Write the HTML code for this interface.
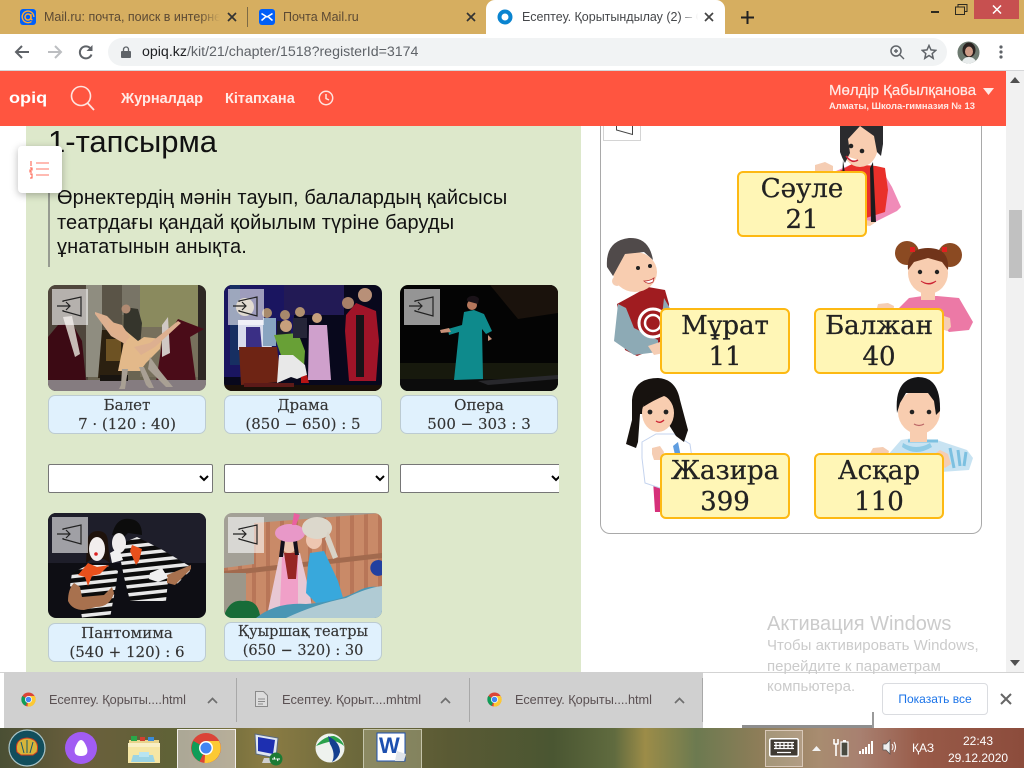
<!DOCTYPE html>
<html lang="kk"><head><meta charset="utf-8"><title>Есептеу</title>
<style>
html,body{margin:0;padding:0;width:1024px;height:768px;overflow:hidden;background:#fff}
body{position:relative;font-family:"Liberation Sans",sans-serif}
.a{position:absolute;white-space:nowrap}
svg{display:block}
.pic{position:absolute;width:158px;height:106px;border-radius:8px;overflow:hidden}
.ov{position:absolute;left:4px;top:4px;width:36px;height:36px;background:rgba(255,255,255,.58)}
.ov svg{position:absolute;left:5px;top:7px}
.cap{position:absolute;width:156px;height:37px;background:#e0f1fd;border:1px solid #bccbd2;border-radius:7px;text-align:center;font:15px/18.5px "DejaVu Serif",serif;color:#333;white-space:nowrap;-webkit-text-stroke:.15px #333}
select{position:absolute;height:29px;width:165px;background:#fff;border:1px solid #767676;border-radius:2px;margin:0;padding:0}
.sign{position:absolute;width:126px;height:61px;padding-top:1px;background:#fff6b6;border:2px solid #fdb913;border-radius:6px;text-align:center;font:26px/31px "DejaVu Serif",serif;color:#222;-webkit-text-stroke:.3px #222}
</style></head><body>

<!-- chrome tab strip -->
<div class="a" style="left:0;top:0;width:1024px;height:34px;background:#d6ae60"></div>
<svg class="a" style="left:20px;top:9px" width="16" height="16"><rect width="16" height="16" rx="3" fill="#005ff9"/><circle cx="8" cy="8" r="3" fill="none" stroke="#ffa930" stroke-width="1.500"/><path d="M11 5v4.500q0 1.500 1.500 1M11.500 12.500a5.800 5.800 0 1 1 2.300-4.500" fill="none" stroke="#ffa930" stroke-width="1.400"/></svg>
<div class="a" style="left:44px;top:10px;width:176px;overflow:hidden;font-size:12.500px;line-height:15px;color:#5c4a34">Mail.ru: почта, поиск в интернете</div>
<div class="a" style="left:200px;top:8px;width:20px;height:18px;background:linear-gradient(90deg,rgba(214,174,96,0),#d6ae60)"></div>
<svg class="a" style="left:227px;top:12px" width="10" height="10"><path d="M1 1l8 8M9 1l-8 8" stroke="#333" stroke-width="1.700"/></svg>
<div class="a" style="left:247px;top:7px;width:1px;height:20px;background:#7d6a45"></div>
<svg class="a" style="left:259px;top:9px" width="16" height="16"><rect width="16" height="16" rx="3" fill="#005ff9"/><path d="M2.500 4.500l5.500 3.500 5.500-3.500M2.500 11.500l4-3.500M13.500 11.500l-4-3.500" fill="none" stroke="#fff" stroke-width="1.500"/></svg>
<div class="a" style="left:283px;top:10px;font-size:12.500px;line-height:15px;color:#5c4a34">Почта Mail.ru</div>
<svg class="a" style="left:466px;top:12px" width="10" height="10"><path d="M1 1l8 8M9 1l-8 8" stroke="#333" stroke-width="1.700"/></svg>
<div class="a" style="left:486px;top:0;width:239px;height:34px;background:#fff;border-radius:9px 9px 0 0"></div>
<svg class="a" style="left:497px;top:9px" width="16" height="16"><circle cx="8" cy="8" r="5.500" fill="none" stroke="#0a84d0" stroke-width="4"/></svg>
<div class="a" style="left:522px;top:10px;width:176px;overflow:hidden;font-size:12.500px;line-height:15px;color:#45474a">Есептеу. Қорытындылау (2) – Opiq</div>
<div class="a" style="left:680px;top:8px;width:18px;height:18px;background:linear-gradient(90deg,rgba(255,255,255,0),#fff)"></div>
<svg class="a" style="left:704px;top:12px" width="10" height="10"><path d="M1 1l8 8M9 1l-8 8" stroke="#444" stroke-width="1.700"/></svg>
<svg class="a" style="left:741px;top:11px" width="13" height="13"><path d="M6.500 0v13M0 6.500h13" stroke="#222" stroke-width="2"/></svg>
<div class="a" style="left:931px;top:11px;width:8px;height:2px;background:#2d2a20"></div>
<svg class="a" style="left:955px;top:4px" width="13" height="11"><path d="M3 2.500V.500h9v7h-2M.500 3h9v7.500h-9z" fill="none" stroke="#2d2a20"/></svg>
<div class="a" style="left:974px;top:0;width:45px;height:19px;background:#c75050"></div>
<svg class="a" style="left:992px;top:5px" width="10" height="9"><path d="M1 .500l8 8M9 .500l-8 8" stroke="#fff" stroke-width="1.500"/></svg>

<!-- address bar -->
<div class="a" style="left:0;top:34px;width:1024px;height:37px;background:#fff"></div>
<div class="a" style="left:0;top:70px;width:1024px;height:1px;background:#d5d6d8"></div>
<svg class="a" style="left:14px;top:44px" width="16" height="16"><path d="M15 8H2.500M8 2L2 8l6 6" fill="none" stroke="#5f6368" stroke-width="2"/></svg>
<svg class="a" style="left:47px;top:44px" width="16" height="16"><path d="M1 8h12.500M8 2l6 6-6 6" fill="none" stroke="#bcbec1" stroke-width="2"/></svg>
<svg class="a" style="left:78px;top:44px" width="16" height="16"><path d="M13.500 10.500a6 6 0 1 1-.8-5.700" fill="none" stroke="#5f6368" stroke-width="2"/><path d="M14.500 1v6h-6z" fill="#5f6368"/></svg>
<div class="a" style="left:108px;top:38px;width:839px;height:28px;background:#f1f3f4;border-radius:14px"></div>
<svg class="a" style="left:121px;top:46px" width="10" height="12"><rect y="5" width="10" height="7" rx="1" fill="#5f6368"/><path d="M2.500 5V3.500a2.500 2.500 0 0 1 5 0V5" fill="none" stroke="#5f6368" stroke-width="1.300"/></svg>
<div class="a" style="left:142px;top:44px;font-size:14.200px;line-height:16px;color:#5f6368"><span style="color:#202124">opiq.kz</span>/kit/21/chapter/1518?registerId=3174</div>
<svg class="a" style="left:889px;top:44px" width="16" height="16"><circle cx="7" cy="7" r="5" fill="none" stroke="#5f6368" stroke-width="1.500"/><path d="M11 11l4 4M5 7h4M7 5v4" stroke="#5f6368" stroke-width="1.400" fill="none"/></svg>
<svg class="a" style="left:921px;top:44px" width="16" height="16"><path d="M8 1.500l2 4.400 4.700.5-3.500 3.200 1 4.700L8 11.500l-4.200 2.800 1-4.700L1.300 6.400 6 5.900z" fill="none" stroke="#5f6368" stroke-width="1.500"/></svg>
<svg class="a" style="left:957px;top:41px" width="23" height="23"><defs><clipPath id="av"><circle cx="11.500" cy="11.500" r="11"/></clipPath></defs><g clip-path="url(#av)"><rect width="23" height="23" fill="#6d7a70"/><ellipse cx="12" cy="9" rx="6.500" ry="7.500" fill="#2a2220"/><ellipse cx="12" cy="10.500" rx="4" ry="5" fill="#cf9d88"/><path d="M4 23q2-7 8-7t8 7z" fill="#e8ecec"/></g></svg>
<svg class="a" style="left:999px;top:45px" width="4" height="14"><circle cx="2" cy="2" r="1.600" fill="#5f6368"/><circle cx="2" cy="7" r="1.600" fill="#5f6368"/><circle cx="2" cy="12" r="1.600" fill="#5f6368"/></svg>

<!-- scrollbar -->
<div class="a" style="left:1006px;top:71px;width:18px;height:601px;background:#f1f1f1"></div>
<svg class="a" style="left:1010px;top:77px" width="10" height="6"><path d="M5 0l5 6H0z" fill="#505050"/></svg>
<svg class="a" style="left:1010px;top:660px" width="10" height="6"><path d="M5 6L0 0h10z" fill="#505050"/></svg>
<div class="a" style="left:1009px;top:210px;width:13px;height:68px;background:#c1c1c1"></div>

<!-- site header -->
<div class="a" style="left:0;top:71px;width:1006px;height:55px;background:#ff5540"></div>
<div class="a" style="left:9px;top:90px;font-size:16px;line-height:18px;font-weight:700;color:#fff;transform:scaleX(1.130);transform-origin:0 0">opiq</div>
<svg class="a" style="left:70px;top:85px" width="26" height="26"><circle cx="11" cy="11" r="9.500" fill="none" stroke="#ffe3de" stroke-width="1.600"/><path d="M17.500 18l6.500 7" stroke="#ffe3de" stroke-width="1.800"/></svg>
<div class="a" style="left:121px;top:91px;font-size:14.500px;line-height:16px;font-weight:700;color:#ffeae6">Журналдар</div>
<div class="a" style="left:225px;top:91px;font-size:14.500px;line-height:16px;font-weight:700;color:#ffeae6">Кітапхана</div>
<svg class="a" style="left:318px;top:90px" width="16" height="16"><circle cx="8" cy="8" r="6.700" fill="none" stroke="#ffe3de" stroke-width="1.500"/><path d="M8 4v4.500l3 1.500" fill="none" stroke="#ffe3de" stroke-width="1.500"/></svg>
<div class="a" style="left:829px;top:83px;font-size:15px;line-height:16px;color:#ffeae6;-webkit-text-stroke:.2px #ffeae6">Мөлдір Қабылқанова</div>
<div class="a" style="left:829px;top:100px;font-size:9.400px;line-height:11px;font-weight:700;color:#ffeae6">Алматы, Школа-гимназия № 13</div>
<svg class="a" style="left:983px;top:88px" width="11" height="7"><path d="M5.500 7L0 0h11z" fill="#ffeae6"/></svg>

<!-- green panel -->
<div class="a" style="left:26px;top:126px;width:555px;height:546px;background:#dde8cb"></div>
<div class="a" style="left:48px;top:124px;font-size:31px;line-height:36px;color:#111">1-тапсырма</div>
<div class="a" style="left:48px;top:193px;width:2px;height:74px;background:#979c91"></div>
<div class="a" style="left:57px;top:186px;font-size:20px;letter-spacing:.12px;line-height:24.500px;color:#111">Өрнектердің мәнін тауып, балалардың қайсысы<br>театрдағы қандай қойылым түріне баруды<br>ұнататынын анықта.</div>
<div class="a" style="left:18px;top:146px;width:44px;height:47px;background:#fff;border-radius:4px;box-shadow:0 2px 8px rgba(0,0,0,.28)"></div>
<svg class="a" style="left:29px;top:161px" width="21" height="18"><path d="M7 2h13M7 8h13M7 14h13" stroke="#ff7466" stroke-width="1"/><path d="M2 0v5M1 7h2v2H1v2h2M1 13h2v4H1" fill="none" stroke="#ff5540" stroke-width="1"/></svg>

<!-- ballet -->
<div class="pic" style="left:48px;top:285px"><svg width="158" height="106"><rect width="158" height="106" fill="#6a6452"/><rect width="40" height="106" fill="#4f463c"/><rect x="38" width="16" height="92" fill="#8f8d80"/><rect x="54" width="20" height="45" fill="#5a5447"/><rect x="92" width="58" height="42" fill="#8a8a5e"/><rect x="74" y="0" width="18" height="30" fill="#787466"/><rect x="150" width="8" height="96" fill="#2e2824"/><rect x="92" y="42" width="58" height="50" fill="#77705c"/><path d="M54 45h23v48H50z" fill="#2b2010"/><rect x="58" y="54" width="15" height="22" fill="#6d5223"/><path d="M0 52l10-12 14-2 10 18 4 40 3 3H0z" fill="#3c0a14"/><path d="M15 32l9-1 8 38-5 3z" fill="#c7bcb6"/><path d="M114 58l10-14 6-10 26 10-14 8 6 45h-40z" fill="#4a0c18"/><path d="M114 40l6-8 2 36-8 4z" fill="#cfc8c4"/><rect y="95" width="158" height="11" fill="#857c80"/><path d="M52 90h28v6H52z" fill="#181410"/><path d="M76 22l14 2 4 14-2 24-17 4z" fill="#35352c"/><circle cx="78" cy="24" r="4.500" fill="#b08a72"/><path d="M78 46l12 10 6-4 18 2-2 10-14 14-6 8-22 0z" fill="#e3b98a"/><path d="M47 27l12 4 14 14 8 6-4 8-14-8-16-22z" fill="#ddb090"/><path d="M60 36l14 4 8 12-6 6-14-12z" fill="#e0b08c"/><path d="M86 62l16-4 28-22 3 2-26 24-14 8z" fill="#ddb090"/><path d="M74 84l-1 16-2 4h6l3-20zM96 82h-5l7 18 3 3h5zM102 72l10 14 13 16h-7L100 84z" fill="#a9a094"/></svg><div class="ov"><svg width="26" height="22" viewBox="0 0 26 22"><path d="M0 10h13M9 6l4 4-4 4M6 6V5l18-4v19L6 15v-1" fill="none" stroke="#222" stroke-width="1.200"/></svg></div></div>

<!-- drama -->
<div class="pic" style="left:224px;top:285px"><svg width="158" height="106"><rect width="158" height="106" fill="#08081c"/><rect width="70" height="92" fill="#1a1560"/><rect x="60" y="0" width="60" height="30" fill="#221a55"/><rect x="6" y="0" width="10" height="80" fill="#172f62"/><circle cx="21" cy="22" r="9" fill="#b9aa92"/><path d="M14 35h32l2 30H14z" fill="#d8dcec"/><path d="M22 42h14l2 22H22z" fill="#3a2f85"/><path d="M15 62h38l4 35-40 3z" fill="#6e2414"/><circle cx="43" cy="28" r="5" fill="#a88a6c"/><rect x="39" y="33" width="13" height="28" fill="#88a4c0"/><circle cx="61" cy="30" r="5" fill="#a8886c"/><path d="M53 36h14v14H53z" fill="#1c1c2c"/><circle cx="62" cy="41" r="6" fill="#c7a07c"/><path d="M50 50l24-2 7 18-1 16-11-8-8 8z" fill="#68a036"/><path d="M55 70l14 0 12 10 2 10-10 4-6-2-14 6z" fill="#e8e8e8"/><path d="M77 92l6-2 2 8-8 0z" fill="#b81414"/><circle cx="93" cy="33" r="5" fill="#c7a07c"/><path d="M85 40h18l4 55H84z" fill="#cfa0cc"/><circle cx="76" cy="27" r="5" fill="#b09070"/><path d="M69 33h14v20H69z" fill="#252538"/><circle cx="124" cy="18" r="6" fill="#a88068"/><circle cx="141" cy="10" r="7" fill="#b89078"/><path d="M122 30l10-12 20 8 3 30-3 40h-27l-4-50z" fill="#a01428"/><path d="M132 30h8v62h-8z" fill="#181318"/><path d="M0 100h158v6H0z" fill="#1a1008"/><path d="M20 98h50v4H20z" fill="#5c1a18"/></svg><div class="ov"><svg width="26" height="22" viewBox="0 0 26 22"><path d="M0 10h13M9 6l4 4-4 4M6 6V5l18-4v19L6 15v-1" fill="none" stroke="#222" stroke-width="1.200"/></svg></div></div>

<!-- opera -->
<div class="pic" style="left:400px;top:285px"><svg width="158" height="106"><rect width="158" height="106" fill="#040404"/><path d="M90 0h68v28l-40 6z" fill="#1a120c"/><rect y="78" width="158" height="20" fill="#17190d"/><rect y="94" width="158" height="12" fill="#0c0c0c"/><path d="M78 96l80-6v4l-70 6z" fill="#28282c"/><circle cx="72" cy="20" r="5" fill="#b5775c"/><path d="M67 16a6 4 0 0 1 12-2l-1 5z" fill="#1a1218"/><path d="M64 27l10-2 10 4 8 17-6 3-4-5 1 50-29 1 5-48-10 3-1-6 14-4z" fill="#0e8a8c"/><path d="M49 43l-9 2 1 3 10-1zM88 50l4 4-4 2z" fill="#c79078"/></svg><div class="ov"><svg width="26" height="22" viewBox="0 0 26 22"><path d="M0 10h13M9 6l4 4-4 4M6 6V5l18-4v19L6 15v-1" fill="none" stroke="#222" stroke-width="1.200"/></svg></div></div>

<div class="cap" style="left:48px;top:395px">Балет<br>7 · (120 : 40)</div>
<div class="cap" style="left:224px;top:395px">Драма<br>(850 − 650) : 5</div>
<div class="cap" style="left:400px;top:395px">Опера<br>500 − 303 : 3</div>

<select style="left:48px;top:464px"></select>
<select style="left:224px;top:464px"></select>
<div class="a" style="left:400px;top:464px;width:159px;height:29px;overflow:hidden"><select style="left:0;top:0"></select></div>

<!-- pantomime -->
<div class="pic" style="left:48px;top:513px;height:105px"><svg width="158" height="105"><defs><pattern id="st" width="10" height="8" patternUnits="userSpaceOnUse" patternTransform="rotate(-6)"><rect width="10" height="8" fill="#0c0c0c"/><rect width="10" height="3.500" fill="#e8e8e8"/></pattern></defs><rect width="158" height="105" fill="#0e0e14"/><rect width="158" height="50" fill="#1e1e2a"/><path d="M24 60l16-8 18 0 12 6-2 14-6 33H34l-4-24-8-8z" fill="url(#st)"/><path d="M20 88q0-12 6-18l6 4 2 10 22-2 8-8 2 6q-4 14-18 14l-12 3q-12 0-16-9z" fill="#a8714e"/><path d="M39 32q0-14 11-14 10 0 10 12l2 20-6-4H44l-6 4z" fill="#1e120c"/><ellipse cx="49" cy="36" rx="8" ry="12" fill="#f2eeee"/><circle cx="48" cy="41" r="1.800" fill="#d22"/><path d="M30 62l10-12 9 4 12-2-9 9-8 2-4 10-3-9z" fill="#e8501c"/><path d="M75 30l14-6 24 12 30 18-1 4-14 14-8-4-2 20H82l-6-24-4-20z" fill="url(#st)"/><path d="M119 62l24-10 0 4-16 16-8-2z" fill="#a8714e"/><path d="M102 60l12-5 6 10-10 4-9-3z" fill="#f0f0f0"/><path d="M64 22q4-18 18-16 12 1 12 16l-14-2-4 4z" fill="#0c0c0c"/><ellipse cx="71" cy="30" rx="7" ry="10" fill="#efecec"/><path d="M62 40l9-5 4 12-11 3z" fill="#f0f0f0"/><path d="M84 32l10 4-3 12-3 4-6-14z" fill="#e8501c"/></svg><div class="ov"><svg width="26" height="22" viewBox="0 0 26 22"><path d="M0 10h13M9 6l4 4-4 4M6 6V5l18-4v19L6 15v-1" fill="none" stroke="#222" stroke-width="1.200"/></svg></div></div>

<!-- puppets -->
<div class="pic" style="left:224px;top:513px;height:105px"><svg width="158" height="105"><defs><pattern id="cu" width="14" height="60" patternUnits="userSpaceOnUse"><rect width="14" height="60" fill="#c98a68"/><rect width="4" height="60" fill="#b87658"/></pattern></defs><rect width="158" height="105" fill="#a3a096"/><path d="M30 10l128-10v105H0V55l30-4z" fill="url(#cu)"/><path d="M0 58L158 40v5L0 63z" fill="#a26a4e"/><path d="M0 60h22v45H0z" fill="#9c978a"/><path d="M46 88l10-48 20 0 10 42 2 12-44 4z" fill="#e8c8d4"/><path d="M58 44h16v50H56z" fill="#f0a0c8"/><path d="M60 40h14l-2 26h-8z" fill="#962624"/><ellipse cx="65" cy="31" rx="8" ry="9" fill="#eec6b0"/><path d="M57 28q8-10 16 0l2 14h-4l-2-14q-4-3-8 0l-2 16h-4z" fill="#15101c"/><ellipse cx="66" cy="20" rx="15" ry="9" fill="#e898c8"/><path d="M68 12l2-12 6 2-4 10z" fill="#ea60a0"/><path d="M86 40l14-2 14 30 6 20-28 2-10-10 2-28z" fill="#38a8dc"/><ellipse cx="90" cy="27" rx="8" ry="9" fill="#eec6b0"/><ellipse cx="93" cy="15" rx="15" ry="11" fill="#dcd8cc"/><path d="M104 18l10 26-5 2-8-20z" fill="#d8d2c6"/><path d="M1 100q6-14 18-12 14-2 17 14v3H1z" fill="#186c38"/><path d="M32 105q20-16 50-14 30-2 50-12 14-8 26-4v30z" fill="#4a96b4"/><path d="M62 105q30-14 60-20 20-10 36-12v32z" fill="#b0cbd4"/><path d="M148 50a8 8 0 0 1 10-2v14a8 8 0 0 1-10-12z" fill="#2240a0"/></svg><div class="ov"><svg width="26" height="22" viewBox="0 0 26 22"><path d="M0 10h13M9 6l4 4-4 4M6 6V5l18-4v19L6 15v-1" fill="none" stroke="#222" stroke-width="1.200"/></svg></div></div>

<div class="cap" style="left:48px;top:623px">Пантомима<br>(540 + 120) : 6</div>
<div class="cap" style="left:224px;top:622px;font-size:14.500px">Қуыршақ театры<br>(650 − 320) : 30</div>

<!-- right card -->
<div class="a" style="left:600px;top:126px;width:380px;height:407px;border:1px solid #a9a9a9;border-top:0;border-radius:0 0 10px 10px"></div>
<div class="a" style="left:603px;top:126px;width:36px;height:14px;border:1px solid #d4d4d4;border-top:0;background:#fff"></div>
<svg class="a" style="left:616px;top:126px" width="20" height="10"><path d="M.500 0v4l16 4.500V0" fill="none" stroke="#444" stroke-width="1"/></svg>

<!-- children -->
<svg class="a" style="left:590px;top:126px" width="420" height="400" viewBox="590 126 420 400">
<!-- Saule -->
<path d="M836 171l14-6 24 2 6 0 12 20 9 20-4 4-24 12-10 3-20-40z" fill="#f08bb8"/><path d="M838 172l14-8 24 2 9 2 3 22-3 22-19 6-22-30z" fill="#e9302a"/>
<path d="M866 220l10 2-6 4-8-1-4-3z" fill="#f5cdb3"/><path d="M815 173l0-8 10-3 8 4 0 9-6 6z" fill="#f5cdb3"/>
<ellipse cx="860" cy="146" rx="18" ry="21" fill="#f8cdb0"/>
<path d="M840 126v26q2 6 5 11l5-10-2-14 12-13 14 10 3 16 4 4 2-12v-18z" fill="#2b2b2e"/><path d="M843 160l3 20h-4zM873 162l3 60-5 0-1-54z" fill="#1c1c1e"/>
<circle cx="851" cy="146" r="2.300" fill="#222"/><circle cx="862" cy="151" r="2.300" fill="#222"/><path d="M846 156q6 8 12 4" fill="#fff" stroke="#c23" stroke-width="1.500"/>
<!-- Murat -->
<path d="M617 304l31-17 17 3 4 14-2 40-30 12-12-6z" fill="#a01c20"/><path d="M618 304l8 4 8 20 24 12v12l-24 3-20-14z" fill="#8daab5"/><path d="M664 298l8 14-10 4z" fill="#8daab5"/>
<circle cx="653" cy="323" r="14" fill="none" stroke="#fff" stroke-width="3"/><circle cx="653" cy="323" r="8" fill="none" stroke="#fff" stroke-width="2.500"/>
<path d="M648 346l12-4 4 4 0 7-10 2z" fill="#f5cdb3"/>
<circle cx="617" cy="281" r="5" fill="#f5cdb3"/><ellipse cx="635" cy="272" rx="22" ry="20" fill="#f8cdb0"/>
<path d="M607 267q-2-26 22-29 20-1 24 22l-9-8-19 2-12 22z" fill="#504a4a"/>
<circle cx="638" cy="268" r="2" fill="#222"/><circle cx="650" cy="266" r="2" fill="#222"/><path d="M644 281q6 0 10-3l-1 4q-5 3-9-1z" fill="#fff" stroke="#b33" stroke-width=".8"/>
<!-- Balzhan -->
<path d="M897 310l12-12 14-2 14 0 22 2 14 24-4 8-20 2-20-20z" fill="#ec79a6"/><path d="M876 312l2-8 10-1 6 3-1 9-4 5-8-1z" fill="#f5cdb3"/><path d="M935 320l6-5 9 3 1 9-4 4-8-3z" fill="#f5cdb3"/>
<circle cx="907" cy="253" r="12" fill="#8b4a22"/><circle cx="950" cy="255" r="12" fill="#8b4a22"/>
<ellipse cx="928" cy="273" rx="20" ry="21" fill="#f8cdb0"/><rect x="921" y="290" width="14" height="10" fill="#f8cdb0"/><path d="M908 270q-2-22 20-22t20 22l-6-8-14-4-14 4z" fill="#71341a"/>
<rect x="910" y="247" width="5" height="5" fill="#e02020"/><rect x="942" y="247" width="5" height="5" fill="#e02020"/>
<circle cx="920" cy="272" r="2.200" fill="#222"/><circle cx="937" cy="272" r="2.200" fill="#222"/><path d="M921 281q7 5 15 0-7 6-15 0z" fill="#fff" stroke="#c23"/>
<!-- Zhazira -->
<path d="M653 480h8v32h-6z" fill="#d6307a"/><path d="M642 442l14-8 18 0 16 10 2 14-12 4-2 20-18 6-15-5-3-25z" fill="#fff" stroke="#c4d3ee"/><path d="M678 442l4 20-5 2-4-18z" fill="#5f9de0"/>
<path d="M632 400q2-22 26-22 18 1 22 22l8 30-4 12-8-6-14-22h-22l-2 28-2 6-10-4 6-24z" fill="#17120f"/>
<ellipse cx="658" cy="413" rx="16" ry="19" fill="#f8cdb0"/><path d="M643 407q2-14 16-15 14 1 15 16-4-10-10-12-10 4-21 11z" fill="#17120f"/>
<circle cx="650" cy="412" r="2.400" fill="#222"/><circle cx="666" cy="412" r="2.400" fill="#222"/><path d="M656 421q4 3 8-1" stroke="#c23" stroke-width="1.300" fill="none"/>
<path d="M652 448l8-2 4 6-2 8h-8l-2-6z" fill="#f5cdb3"/>
<!-- Asqar -->
<path d="M887 456l14-16 12-2 10 4 14-2 30 10 6 8-4 12-28 2-20-10-20 2z" fill="#c8e3f2"/><path d="M950 448l4 20M958 450l2 16M966 452l-2 14M908 441l30 0" stroke="#7cc0e0" stroke-width="3" fill="none"/><path d="M903 443q13 8 27 0l2 4q-16 10-30 0z" fill="#8fcbe6"/>
<path d="M869 455l4-7 10-1 6 4-2 8-6 8-8-2z" fill="#f5cdb3"/><path d="M932 456l8-6 8 4 3 10-6 4-9-6z" fill="#f5cdb3"/>
<rect x="910" y="428" width="17" height="14" fill="#f8cdb0"/>
<ellipse cx="919" cy="412" rx="21" ry="22" fill="#f8cdb0"/>
<path d="M897 413q-3-34 21-36 23 0 22 34l-4 4-2-14-6-8-22 0-6 10z" fill="#141416"/>
<circle cx="912" cy="412" r="2.300" fill="#222"/><circle cx="929" cy="412" r="2.300" fill="#222"/><path d="M914 424q5 3 10 0" stroke="#b66" stroke-width="1.200" fill="none"/>
</svg>

<div class="sign" style="left:737px;top:171px">Сәуле<br>21</div>
<div class="sign" style="left:660px;top:308px">Мұрат<br>11</div>
<div class="sign" style="left:814px;top:308px">Балжан<br>40</div>
<div class="sign" style="left:660px;top:453px">Жазира<br>399</div>
<div class="sign" style="left:814px;top:453px">Асқар<br>110</div>

<!-- download shelf -->
<div class="a" style="left:0;top:672px;width:1024px;height:56px;background:#fff;border-top:1px solid #d3d3d3;box-sizing:border-box"></div>
<div class="a" style="left:4px;top:672px;width:699px;height:56px;background:#d0d0d0"></div>
<svg class="a" style="left:21px;top:692px" width="15" height="15" viewBox="0 0 30 30"><circle cx="15" cy="15" r="14" fill="#db4437"/><path d="M15 15L2.500 8A14 14 0 0 0 9 27.700z" fill="#0f9d58"/><path d="M15 8h12.300A14 14 0 0 1 13 29z" fill="#fcc934"/><circle cx="15" cy="15" r="7" fill="#fff"/><circle cx="15" cy="15" r="5.500" fill="#4285f4"/></svg>
<div class="a" style="left:49px;top:692px;font-size:12.700px;line-height:16px;color:#5a5052">Есептеу. Қорыты....html</div>
<svg class="a" style="left:207px;top:697px" width="11" height="7"><path d="M1 6l4.500-4.500L10 6" fill="none" stroke="#6f6f6f" stroke-width="1.700"/></svg>
<div class="a" style="left:236px;top:678px;width:1px;height:44px;background:#a8a8a8"></div>
<svg class="a" style="left:255px;top:691px" width="13" height="16"><path d="M.500.500h8l4 4v11H.500z" fill="#dcdcdc" stroke="#8a8a8a"/><path d="M3 8h7M3 10.500h7M3 13h5" stroke="#8a8a8a"/></svg>
<div class="a" style="left:282px;top:692px;font-size:12.900px;line-height:16px;color:#5a5052">Есептеу. Қорыт....mhtml</div>
<svg class="a" style="left:440px;top:697px" width="11" height="7"><path d="M1 6l4.500-4.500L10 6" fill="none" stroke="#6f6f6f" stroke-width="1.700"/></svg>
<div class="a" style="left:469px;top:678px;width:1px;height:44px;background:#a8a8a8"></div>
<svg class="a" style="left:487px;top:692px" width="15" height="15" viewBox="0 0 30 30"><circle cx="15" cy="15" r="14" fill="#db4437"/><path d="M15 15L2.500 8A14 14 0 0 0 9 27.700z" fill="#0f9d58"/><path d="M15 8h12.300A14 14 0 0 1 13 29z" fill="#fcc934"/><circle cx="15" cy="15" r="7" fill="#fff"/><circle cx="15" cy="15" r="5.500" fill="#4285f4"/></svg>
<div class="a" style="left:515px;top:692px;font-size:12.700px;line-height:16px;color:#5a5052">Есептеу. Қорыты....html</div>
<svg class="a" style="left:674px;top:697px" width="11" height="7"><path d="M1 6l4.500-4.500L10 6" fill="none" stroke="#6f6f6f" stroke-width="1.700"/></svg>
<div class="a" style="left:702px;top:678px;width:1px;height:44px;background:#a8a8a8"></div>
<div class="a" style="left:882px;top:683px;width:104px;height:30px;border:1px solid #dadce0;border-radius:4px;background:#fff;text-align:center;font-size:12px;line-height:30px;color:#1a73e8">Показать все</div>
<svg class="a" style="left:1000px;top:693px" width="12" height="12"><path d="M1 1l10 10M11 1L1 11" stroke="#666" stroke-width="2"/></svg>

<!-- activation watermark -->
<div class="a" style="left:767px;top:612px;font-size:20px;line-height:24px;color:#cbcbcb">Активация Windows</div>
<div class="a" style="left:767px;top:636px;font-size:15px;line-height:20.500px;color:#cbcbcb">Чтобы активировать Windows,<br>перейдите к параметрам<br>компьютера.</div>

<!-- taskbar -->
<div class="a" style="left:0;top:728px;width:1024px;height:40px;background:linear-gradient(90deg,#4a4f34 0%,#6b5f3c 8%,#5e6236 18%,#8b7c44 26%,#6e6a3c 34%,#5a5a34 44%,#4a5632 54%,#606b3f 60%,#9c8c48 63%,#6c7a50 68%,#8d7d58 74%,#a88c70 80%,#a88070 84%,#985a48 90%,#8c4c3c 100%)"></div>
<div class="a" style="left:742px;top:725px;width:131px;height:3px;background:#8e8e8e"></div>
<div class="a" style="left:872px;top:712px;width:2px;height:16px;background:#9a9a9a"></div>

<svg class="a" style="left:8px;top:729px" width="38" height="38"><circle cx="19" cy="19" r="18" fill="#124e5c" stroke="#a9c4c8" stroke-width="1.200"/><path d="M9 23q-3-13 10-14 13 1 10 14l-4 3H13z" fill="#d7b53a" stroke="#d03a20"/><path d="M19 11v13M13 13l3 11M25 13l-3 11" stroke="#1a5a6a"/></svg>
<svg class="a" style="left:65px;top:732px" width="32" height="32"><circle cx="16" cy="16" r="16" fill="#a15cf3"/><path d="M16 8q3 0 6 8 2 8-6 8t-6-8q3-8 6-8z" fill="#fff"/></svg>
<svg class="a" style="left:127px;top:733px" width="34" height="31"><path d="M2 7h30v6H2z" fill="#e8d48c"/><rect x="4" y="3" width="6" height="5" fill="#29a84a"/><rect x="13" y="4" width="5" height="4" fill="#d04030"/><rect x="21" y="4" width="6" height="4" fill="#3a8ad8"/><path d="M1 10h32v20H1z" fill="#f6e6a4"/><path d="M1 10h32v4H1z" fill="#f9efc4"/><path d="M6 22h20l2 7H4z" fill="#9cd4e4"/><rect x="12" y="19" width="10" height="5" fill="#b8e4f0"/></svg>
<div class="a" style="left:177px;top:729px;width:57px;height:38px;background:rgba(225,215,215,.6);border:1px solid #f1eeea;box-sizing:content-box"></div>
<svg class="a" style="left:191px;top:733px" width="30" height="30"><circle cx="15" cy="15" r="15" fill="#db4437"/><path d="M15 15L2.500 8A15 15 0 0 0 8.500 28.500z" fill="#0f9d58"/><path d="M15 8h13A15 15 0 0 1 13.500 30z" fill="#fcc934"/><circle cx="15" cy="15" r="7" fill="#fff"/><circle cx="15" cy="15" r="5.500" fill="#4285f4"/></svg>
<svg class="a" style="left:252px;top:732px" width="32" height="34"><path d="M3 2l23 4-2 20-20-4z" fill="#dfe6f0" stroke="#5a6a80"/><path d="M6 5l17 3-2 14-15-3z" fill="#1d2fb0"/><path d="M12 26h10l3 5H10z" fill="#cfcfd0"/><circle cx="24" cy="27" r="6.500" fill="#1c7a34"/><path d="M20 27h3l-1-2M28 27h-3l1 2" stroke="#fff" fill="none"/></svg>
<svg class="a" style="left:315px;top:733px" width="30" height="30"><circle cx="15" cy="15" r="14.500" fill="#eef2ee"/><path d="M1 13q8-10 18-10 8 3 10 10-6-5-12-5-8 2-16 5z" fill="#2ba24c"/><path d="M13 3q12 6 12 16-2 7-8 10 4-8-2-18z" fill="#15408f"/></svg>
<div class="a" style="left:363px;top:729px;width:57px;height:38px;background:rgba(215,215,190,.3);border:1px solid #c4c4aa"></div>
<svg class="a" style="left:376px;top:732px" width="31" height="31"><rect x="1" y="1" width="28" height="28" fill="#fff" stroke="#1d50b0"/><text x="3" y="21" font-family="Liberation Sans,sans-serif" font-size="22" font-weight="700" fill="#1d50b0">W</text><path d="M21 19l9 3-2 7H19z" fill="#dfe4ea"/></svg>

<div class="a" style="left:765px;top:730px;width:36px;height:35px;background:rgba(255,255,255,.18);border:1px solid #d9c8b8"></div>
<svg class="a" style="left:769px;top:738px" width="30" height="20"><rect x=".750" y=".750" width="28.500" height="17.500" rx="1.500" fill="#3f3a32" stroke="#fff" stroke-width="1.500"/><path d="M5 4.500h20M5 7.500h20M5 10.500h20M7 4v7M11 4v7M15 4v7M19 4v7M23 4v7M8 14.500h14" stroke="#fff" stroke-width="1.200"/></svg>
<svg class="a" style="left:812px;top:746px" width="9" height="5"><path d="M4.500 0L9 5H0z" fill="#f2f2f2"/></svg>
<svg class="a" style="left:833px;top:739px" width="16" height="18"><path d="M.500 5h5M3 5v12M1 0v5M5 0v5" stroke="#fff" stroke-width="1.600" fill="none"/><rect x="8" y="3" width="7" height="14" fill="#4a4a40" stroke="#fff" stroke-width="1.200"/><rect x="10" y="1" width="3" height="2" fill="#fff"/></svg>
<svg class="a" style="left:858px;top:741px" width="15" height="13"><path d="M1 10h2v3H1zM4 8h2v5H4zM7 6h2v7H7zM10 3h2v10h-2zM13 0h2v13h-2z" fill="#fff"/></svg>
<svg class="a" style="left:882px;top:739px" width="16" height="16"><path d="M1 5h3l4-4v14l-4-4H1z" fill="#eee" stroke="#555" stroke-width=".7"/><path d="M10 5q2 3 0 6M12 3q3 5 0 10" stroke="#fff" fill="none"/></svg>
<div class="a" style="left:912px;top:741px;font-size:12px;line-height:14px;color:#fff">ҚАЗ</div>
<div class="a" style="left:948px;top:733px;width:60px;text-align:center;font-size:12px;line-height:17px;color:#fff">22:43<br>29.12.2020</div>
</body></html>
